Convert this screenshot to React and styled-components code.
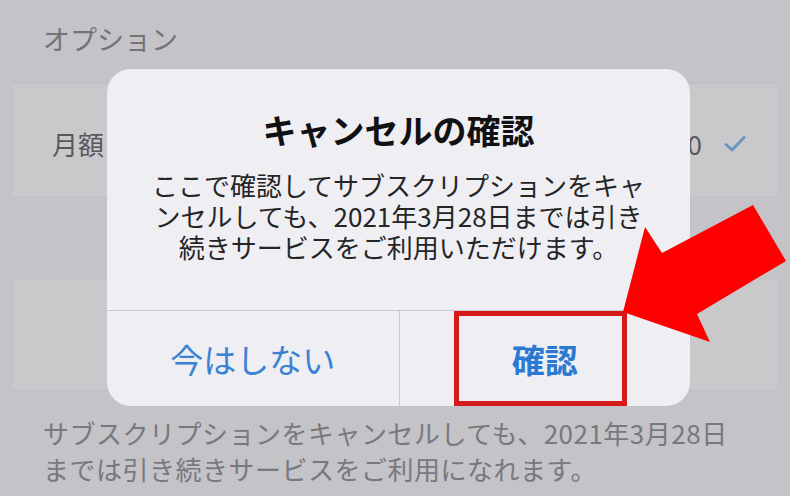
import React from "react";
import styled, { createGlobalStyle } from "styled-components";

const GlobalStyle = createGlobalStyle`
  html, body { margin: 0; padding: 0; }
  body {
    background: #c3c3c8;
    font-family: "Noto Sans CJK JP", "Noto Sans", sans-serif;
  }
`;

const Screen = styled.div`
  position: relative;
  width: 790px;
  height: 496px;
  overflow: hidden;
  background: #c3c3c8;
`;

const SectionHeader = styled.div`
  box-sizing: border-box;
  height: 83px;
  padding: 22px 0 0 43px;
  font-size: 27px;
  line-height: 34px;
  color: #737378;
`;

const Group = styled.div`
  margin: 0 13px;
  background: #c9c9cc;
  border-top: 1px solid #bfbfc3;
  border-bottom: 1px solid #bfbfc3;
`;

const Cell = styled.div`
  box-sizing: border-box;
  height: ${(p) => p.$h}px;
  display: flex;
  align-items: center;
  justify-content: space-between;
  padding: 6px 31px 0 39px;
  font-size: 26px;
  color: #58585c;
`;

const CellValue = styled.div`
  display: flex;
  align-items: center;
  gap: 22px;
`;

const SectionGap = styled.div`
  height: 80px;
`;

const Footer = styled.div`
  padding: 24px 0 0 43px;
  font-size: 26px;
  line-height: 36px;
  letter-spacing: 0.5px;
  color: #78787d;
`;

const Overlay = styled.div`
  position: absolute;
  inset: 0;
  display: flex;
  justify-content: center;
  align-items: flex-start;
  padding: 69px 0 0 7px;
  box-sizing: border-box;
`;

const Dialog = styled.div`
  width: 583px;
  height: 337px;
  border-radius: 24px;
  background: #efeff3;
  display: flex;
  flex-direction: column;
  overflow: hidden;
`;

const DialogBody = styled.div`
  flex: 1;
  display: flex;
  flex-direction: column;
  align-items: center;
  padding-top: 41px;
  text-align: center;
`;

const Title = styled.div`
  font-size: 34px;
  line-height: 40px;
  font-weight: 700;
  color: #111113;
`;

const Message = styled.div`
  margin-top: 19px;
  display: flex;
  flex-direction: column;
  align-items: center;
  font-size: 26px;
  color: #252527;
  white-space: nowrap;
`;

const MessageLine = styled.div`
  height: 31px;
  line-height: 31px;
`;

const ButtonRow = styled.div`
  height: 95px;
  display: grid;
  grid-template-columns: 1fr 1fr;
  border-top: 1px solid #c9c9cd;
`;

const AlertButton = styled.div`
  display: flex;
  align-items: center;
  justify-content: center;
  font-size: 33px;
  font-weight: ${(p) => (p.$bold ? 700 : 400)};
  color: ${(p) => (p.$bold ? "#2c79d2" : "#3a82d4")};
  border-left: ${(p) => (p.$divider ? "1px solid #c9c9cd" : "none")};
`;

const Annotation = styled.svg`
  position: absolute;
  left: 0;
  top: 0;
  width: 790px;
  height: 496px;
  pointer-events: none;
`;

const Check = () => (
  <svg width="22" height="18" viewBox="0 0 22 18">
    <path
      d="M2 9.5 L8 15 L20 2.5"
      fill="none"
      stroke="#6f94c4"
      strokeWidth="3"
      strokeLinecap="round"
      strokeLinejoin="round"
    />
  </svg>
);

export default function App() {
  return (
    <>
      <GlobalStyle />
      <Screen>
        <SectionHeader>オプション</SectionHeader>
        <Group>
          <Cell $h={113}>
            <span>月額</span>
            <CellValue>
              <span>¥480</span>
              <Check />
            </CellValue>
          </Cell>
        </Group>
        <SectionGap />
        <Group>
          <Cell $h={111}>
            <span></span>
          </Cell>
        </Group>
        <Footer>
          サブスクリプションをキャンセルしても、2021年3月28日
          <br />
          までは引き続きサービスをご利用になれます。
        </Footer>

        <Overlay>
          <Dialog>
            <DialogBody>
              <Title>キャンセルの確認</Title>
              <Message>
                <MessageLine>ここで確認してサブスクリプションをキャ</MessageLine>
                <MessageLine>ンセルしても、2021年3月28日までは引き</MessageLine>
                <MessageLine>続きサービスをご利用いただけます。</MessageLine>
              </Message>
            </DialogBody>
            <ButtonRow>
              <AlertButton>今はしない</AlertButton>
              <AlertButton $divider $bold>
                確認
              </AlertButton>
            </ButtonRow>
          </Dialog>
        </Overlay>

        <Annotation viewBox="0 0 790 496">
          <rect
            x="456.5"
            y="313.5"
            width="168"
            height="90"
            fill="none"
            stroke="#d41a1a"
            strokeWidth="5"
          />
          <polygon
            points="623,312 645,227 662,253 753,205 786,261 697,314 710,342"
            fill="#fe0000"
          />
        </Annotation>
      </Screen>
    </>
  );
}
